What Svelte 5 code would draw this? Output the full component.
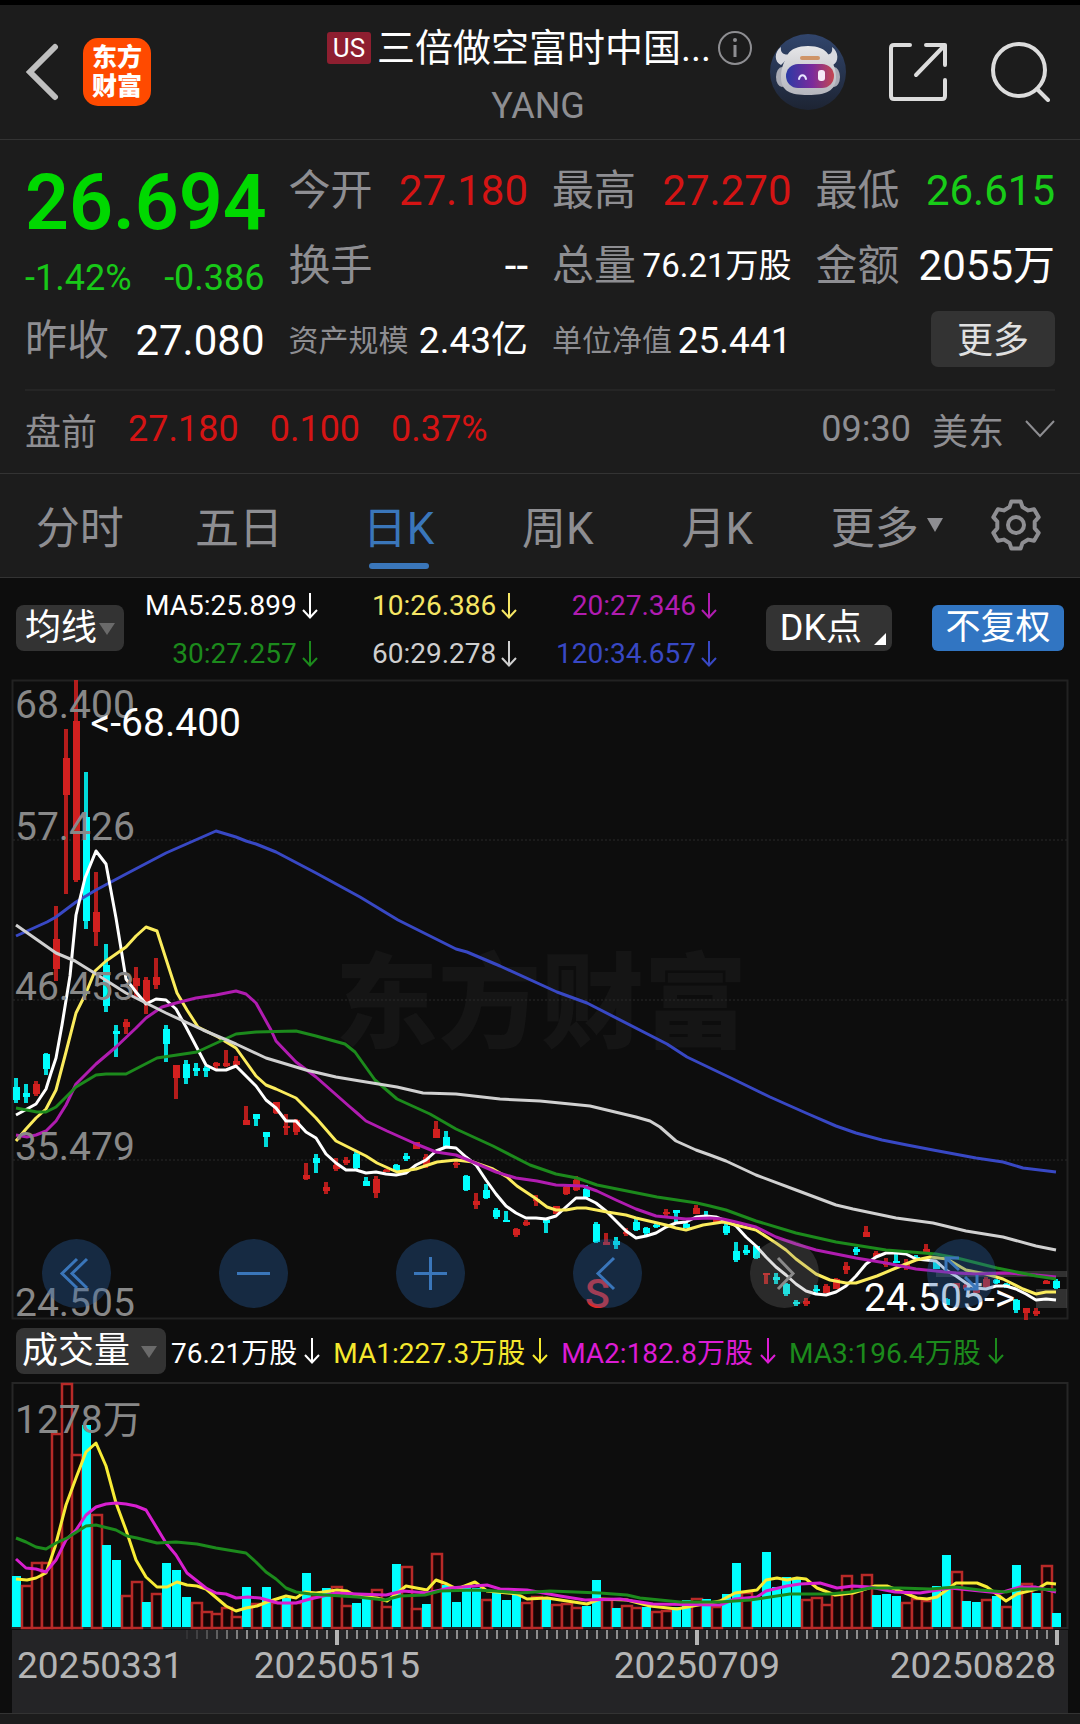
<script>
  const stats = [
    { label: '今开', value: '27.180', tone: 'up' },
    { label: '最高', value: '27.270', tone: 'up' },
    { label: '最低', value: '26.615', tone: 'down' },
    { label: '换手', value: '--', tone: '' },
    { label: '总量', value: '76.21万股', tone: '', size: 'tight' },
    { label: '金额', value: '2055万', tone: '' },
    { label: '昨收', value: '27.080', tone: '' },
    { label: '资产规模', value: '2.43亿', tone: '', size: 'long' },
    { label: '单位净值', value: '25.441', tone: '', size: 'long' }
  ];

  const tabs = ['分时', '五日', '日K', '周K', '月K'];
  let active = $state('日K');

  const averages = [
    { text: 'MA5:25.899', color: 'white' },
    { text: '10:26.386', color: 'yellow' },
    { text: '20:27.346', color: 'magenta' },
    { text: '30:27.257', color: 'green' },
    { text: '60:29.278', color: 'grey' },
    { text: '120:34.657', color: 'blue' }
  ];

  const volumeAverages = [
    { text: '76.21万股', color: 'white' },
    { text: 'MA1:227.3万股', color: 'lemon' },
    { text: 'MA2:182.8万股', color: 'pink' },
    { text: 'MA3:196.4万股', color: 'green' }
  ];

  const step = 10;
  const firstX = 16;

  // direction, high, body top, body bottom, low
  const candles = `c 1078 1087 1100 1103|c 1084 1093 1097 1103|r 1081 1084 1094 1096|c 1053 1054 1069 1075|r 906 939 969 981
r 729 758 795 894|r 680 721 880 882|c 772 817 921 929|r 872 912 932 946|c 944 965 1006 1012
c 1025 1031 1034 1057|r 1019 1022 1027 1034|r 967 978 986 997|r 977 980 1003 1014|r 958 977 985 989
c 1025 1029 1044 1062|r 1065 1065 1078 1099|c 1060 1064 1078 1084|c 1063 1068 1071 1076|c 1066 1068 1071 1077
r 1062 1063 1066 1069|r 1050 1063 1066 1067|r 1056 1061 1065 1067|r 1106 1120 1125 1125|c 1114 1114 1119 1126
c 1132 1132 1137 1147|r 1102 1102 1113 1114|r 1114 1126 1128 1135|r 1119 1120 1132 1135|r 1163 1175 1179 1180
c 1154 1158 1163 1173|r 1182 1187 1191 1194|r 1158 1165 1169 1171|r 1157 1160 1163 1165|c 1152 1154 1168 1169
c 1177 1181 1186 1186|r 1176 1179 1193 1198|r 1169 1170 1172 1172|c 1164 1165 1172 1172|c 1153 1156 1159 1161
r 1142 1142 1149 1149|r 1154 1157 1165 1168|r 1121 1129 1138 1138|c 1131 1137 1147 1147|r 1161 1163 1165 1168
c 1175 1176 1190 1191|r 1193 1201 1205 1209|c 1184 1190 1198 1199|c 1208 1210 1217 1219|c 1211 1220 1222 1222
r 1228 1229 1235 1237|r 1220 1222 1225 1226|r 1195 1199 1201 1206|c 1220 1220 1223 1233|r 1206 1206 1214 1214
r 1186 1187 1194 1195|r 1176 1180 1190 1191|c 1185 1189 1197 1198|c 1222 1224 1242 1243|r 1233 1242 1245 1245
c 1237 1241 1245 1249|r 1228 1232 1234 1236|c 1219 1222 1230 1231|c 1227 1228 1233 1235|c 1223 1225 1227 1228
r 1209 1212 1214 1216|c 1210 1210 1213 1222|c 1222 1224 1228 1228|r 1205 1208 1214 1214|c 1211 1215 1218 1218
r 1217 1219 1222 1222|c 1224 1226 1233 1235|c 1242 1251 1260 1262|c 1245 1250 1253 1255|c 1246 1246 1258 1259
r 1273 1273 1275 1284|c 1273 1277 1280 1284|c 1283 1284 1294 1296|c 1300 1302 1304 1306|r 1298 1301 1304 1306
c 1285 1289 1291 1293|r 1284 1286 1293 1293|r 1278 1279 1289 1289|r 1262 1266 1270 1274|c 1247 1249 1252 1255
r 1226 1232 1237 1237|r 1251 1253 1257 1257|r 1258 1263 1265 1267|c 1254 1261 1263 1263|r 1259 1263 1267 1270
c 1255 1257 1259 1260|r 1244 1249 1253 1253|c 1262 1262 1269 1269|c 1298 1299 1305 1305|r 1283 1283 1288 1288
r 1283 1285 1289 1289|r 1287 1290 1293 1293|r 1277 1279 1287 1288|c 1279 1280 1283 1284|c 1283 1284 1287 1288
c 1299 1300 1310 1313|r 1308 1308 1313 1320|r 1308 1311 1314 1316|r 1280 1281 1284 1284|c 1279 1281 1288 1289`
    .split(/[|\n]/)
    .map((row, i) => {
      const [dir, ...v] = row.trim().split(' ');
      const [high, top, bottom, low] = v.map(Number);
      return { dir, high, top, bottom, low, x: firstX + i * step };
    });

  const volumes = `c1576 r1585 r1562 r1562 r1433 r1383 r1454 c1425 r1514 c1545 c1560 r1595 r1581 c1602 r1593 c1563 c1570 c1597 r1602 r1611
r1613 r1607 r1616 c1587 r1603 c1587 r1602 c1598 r1602 c1573 r1596 c1588 r1586 r1605 c1603 c1597 r1589 r1606 c1564 r1566
r1608 c1604 r1553 c1585 c1602 c1585 c1588 r1599 c1593 c1600 c1595 r1602 r1596 c1598 r1604 r1603 r1607 c1606 c1580 r1599
c1608 r1605 r1607 c1607 r1611 r1610 c1607 c1600 r1598 c1599 r1606 c1594 c1563 r1592 c1598 c1552 c1587 c1577 c1579 r1599
r1597 r1604 r1594 r1575 r1590 r1574 c1595 c1594 c1596 r1602 r1598 r1600 c1586 c1555 r1571 c1601 c1602 r1599 c1596 r1606
c1565 r1583 c1593 r1565 c1613`
    .split(/\s+/)
    .map((v, i) => ({ dir: v[0], top: Number(v.slice(1)), x: firstX + i * step }));

  const priceLines = [
    { color: '#3848c4', pts: '16,936 47,922 56,917 76,902 96,890 126,874 166,853 216,831 236,837 246,841 256,844 276,852 316,873 360,897 398,920 456,949 467,952 500,966 557,992 587,1003 667,1044 687,1057 733,1079 770,1097 806,1113 836,1126 856,1133 882,1140 907,1145 933,1150 976,1158 1003,1162 1023,1168 1056,1172' },
    { color: '#fff', pts: '16,1115 27,1109 36,1104 46,1089 51,1073 56,1058 62,1025 70,976 76,915 85,878 96,851 106,864 116,918 126,979 136,992 146,1004 156,999 166,1000 176,1009 186,1027 196,1046 206,1065 216,1070 226,1070 236,1066 246,1076 256,1086 266,1100 276,1108 286,1121 296,1121 306,1132 316,1138 326,1154 336,1163 346,1170 356,1170 366,1173 376,1172 386,1174 396,1175 406,1173 416,1165 426,1160 436,1151 446,1147 456,1148 466,1157 476,1165 486,1180 496,1194 506,1206 516,1213 526,1218 536,1218 546,1219 556,1216 566,1207 576,1198 586,1198 596,1203 606,1211 616,1221 626,1231 636,1238 646,1236 656,1233 666,1227 676,1223 686,1222 696,1217 706,1216 716,1217 726,1221 736,1226 746,1237 756,1246 766,1257 776,1267 786,1275 796,1284 806,1291 816,1294 826,1295 836,1292 846,1286 856,1276 866,1264 876,1257 886,1253 896,1253 906,1254 916,1259 926,1260 936,1261 946,1270 956,1276 966,1283 976,1288 986,1289 996,1286 1006,1286 1016,1289 1026,1294 1036,1300 1046,1299 1056,1300' },
    { color: '#fbec5d', pts: '16,1141 26,1129 36,1118 46,1109 56,1090 66,1052 76,1013 86,993 95,971 106,961 116,954 126,947 136,936 146,927 157,931 166,959 177,993 187,1010 198,1027 218,1037 236,1048 256,1076 266,1085 276,1089 296,1098 316,1118 336,1141 350,1148 366,1156 377,1163 397,1172 416,1169 437,1162 456,1160 473,1162 493,1169 507,1177 517,1186 535,1198 547,1207 556,1210 566,1210 577,1208 586,1208 607,1212 626,1215 636,1218 666,1225 676,1228 686,1230 703,1225 723,1222 736,1225 756,1230 776,1243 786,1250 796,1259 816,1274 830,1280 846,1283 856,1283 877,1276 896,1268 916,1260 930,1257 947,1259 966,1270 986,1274 1003,1279 1023,1289 1036,1294 1046,1292 1056,1292' },
    { color: '#b01cb0', pts: '16,1135 27,1137 36,1135 46,1131 56,1121 66,1105 76,1084 96,1064 116,1047 136,1028 146,1018 162,1007 176,1003 196,998 216,995 236,991 246,994 256,1003 271,1030 276,1041 296,1062 316,1077 350,1107 357,1113 366,1121 387,1131 416,1144 436,1152 456,1155 473,1162 496,1172 516,1178 537,1181 556,1185 583,1186 597,1191 616,1200 636,1209 656,1216 686,1219 710,1218 723,1219 736,1222 756,1227 776,1237 796,1244 816,1250 856,1258 886,1263 916,1269 956,1273 976,1274 1006,1273 1036,1275 1056,1277' },
    { color: '#1c8a1c', pts: '16,1108 37,1112 46,1112 56,1107 76,1087 96,1075 106,1074 126,1074 157,1058 197,1052 236,1034 256,1032 296,1031 316,1036 345,1044 355,1052 375,1080 397,1099 430,1114 456,1129 493,1146 530,1165 556,1174 577,1178 597,1185 657,1197 697,1203 710,1206 726,1210 756,1221 796,1233 836,1242 886,1250 936,1254 957,1258 997,1268 1036,1276 1056,1279' },
    { color: '#d0d0d0', pts: '16,925 36,939 56,953 75,961 96,974 126,993 146,1003 166,1013 203,1030 236,1044 266,1058 306,1070 336,1077 360,1081 397,1087 423,1093 456,1094 500,1099 540,1101 590,1106 636,1117 650,1121 660,1127 676,1141 696,1150 710,1155 726,1161 756,1175 796,1190 836,1205 853,1209 896,1218 933,1223 966,1231 1003,1237 1036,1246 1056,1250' }
  ];

  const volumeLines = [
    { color: '#f8ec36', pts: '16,1579 27,1580 36,1578 46,1573 55,1547 66,1505 76,1478 86,1452 96,1443 106,1466 116,1503 126,1530 136,1560 146,1577 157,1587 167,1587 177,1582 187,1585 197,1586 206,1589 226,1606 236,1611 246,1608 257,1606 267,1602 286,1596 296,1598 305,1592 316,1593 337,1590 347,1591 356,1596 367,1597 377,1598 387,1601 396,1594 406,1586 427,1590 436,1580 447,1584 457,1589 475,1582 487,1591 517,1594 527,1599 547,1598 587,1604 600,1599 627,1600 650,1606 677,1609 693,1606 720,1601 735,1593 757,1590 766,1580 777,1578 787,1580 797,1578 806,1579 817,1588 835,1595 853,1593 875,1586 887,1586 905,1593 917,1598 927,1599 937,1597 956,1583 977,1583 987,1587 1006,1601 1017,1594 1037,1589 1047,1583 1056,1584' },
    { color: '#d81fd0', pts: '16,1559 26,1568 36,1569 46,1572 56,1560 66,1540 76,1530 86,1515 96,1507 106,1504 116,1503 126,1504 136,1506 146,1510 166,1543 176,1555 187,1573 206,1588 216,1593 226,1594 236,1598 248,1597 260,1598 278,1603 296,1603 310,1599 336,1593 357,1594 386,1595 403,1591 427,1593 450,1588 487,1585 500,1589 527,1590 560,1596 585,1600 620,1599 640,1602 653,1604 720,1605 735,1599 757,1597 766,1591 787,1586 800,1584 820,1583 837,1588 853,1586 870,1587 895,1592 920,1593 950,1588 970,1590 1000,1593 1020,1587 1035,1587 1056,1592' },
    { color: '#1c8a1c', pts: '16,1538 26,1542 36,1547 46,1549 56,1543 67,1538 86,1526 96,1525 116,1530 127,1536 137,1538 157,1543 176,1542 197,1544 216,1548 246,1553 256,1562 266,1572 276,1579 286,1588 296,1592 310,1594 357,1597 385,1600 400,1596 425,1595 440,1591 475,1590 495,1591 520,1593 550,1591 600,1593 627,1595 640,1598 680,1602 720,1602 750,1600 790,1594 830,1594 850,1592 870,1588 900,1588 930,1589 956,1587 980,1590 1006,1592 1020,1589 1040,1589 1056,1590' }
  ];

  const priceLabels = [
    { text: '68.400', y: 718 },
    { text: '57.426', y: 840 },
    { text: '46.453', y: 1000 },
    { text: '35.479', y: 1160 },
    { text: '24.505', y: 1316 }
  ];

  const ticks = Array.from({ length: 88 }, (_, k) => {
    const x = 187 + k * 10;
    return { x, major: x === 337 || x === 697 || x === 1057, opacity: Math.min(1, (k + 1) / 7) };
  });

  const tools = [
    { name: '最早', d: 'M35 20 L20 34.500 L35 49 M45 20 L30 34.500 L45 49' },
    { name: '缩小', d: 'M18 34.500 H51' },
    { name: '放大', d: 'M18 34.500 H51 M34.500 18 V51' },
    { name: '向左', d: 'M41 19 L25 34.500 L41 50' },
    { name: '向右', d: 'M28 19 L43 34.500 L28 50', off: true },
    { name: '全屏', d: 'M19 32 V19 H32 M19 19 L32 31 M37 50 H50 V36 M38 38 L50 50' }
  ];

  // Six-toothed gear outline
  const gear = Array.from({ length: 6 }, (_, k) => {
    const at = (deg, r) => {
      const a = ((k * 60 - 90 + deg) * Math.PI) / 180;
      return `${(26 + r * Math.cos(a)).toFixed(1)},${(26 + r * Math.sin(a)).toFixed(1)}`;
    };
    return [at(-20, 19), at(-11, 24), at(11, 24), at(20, 19)].join(' ');
  }).join(' ');
</script>

{#snippet downArrow()}
  <svg class="arrow" viewBox="0 0 16 28" aria-hidden="true"><path d="M8 1 V25 M1 18 L8 25.500 L15 18" /></svg>
{/snippet}

<div class="app">
  <header class="top">
    <div class="left">
      <button class="plain" aria-label="返回">
        <svg width="34" height="60" viewBox="0 0 34 60"><path d="M30 5 L5 30 L30 55" fill="none" stroke="#bfbfbf" stroke-width="6" stroke-linecap="round" /></svg>
      </button>
      <a class="logo" href="#home"><span>东方</span><span>财富</span></a>
    </div>
    <div class="title">
      <h1>
        <span class="us">US</span>
        <span>三倍做空富时中国...</span>
        <svg width="36" height="36" viewBox="0 0 36 36" aria-hidden="true">
          <circle cx="18" cy="18" r="16" fill="none" stroke="#8e8e92" stroke-width="2" />
          <path d="M18 15 V27" stroke="#8e8e92" stroke-width="3" /><circle cx="18" cy="10" r="2" fill="#8e8e92" />
        </svg>
      </h1>
      <p>YANG</p>
    </div>
    <div class="right">
      <button class="plain" aria-label="智能助手">
        <svg width="76" height="76" viewBox="0 0 76 76">
          <defs>
            <linearGradient id="sky" x1="0" y1="0" x2="0" y2="1"><stop offset="0" stop-color="#31456c" /><stop offset="1" stop-color="#1d2433" /></linearGradient>
            <linearGradient id="visor" x1="0" y1="0" x2="1" y2="0"><stop offset="0" stop-color="#2b3aa5" /><stop offset=".55" stop-color="#7b2a9c" /><stop offset="1" stop-color="#c4474f" /></linearGradient>
            <linearGradient id="shell" x1="0" y1="0" x2="0" y2="1"><stop offset="0" stop-color="#e6e6e8" /><stop offset="1" stop-color="#b4b5bd" /></linearGradient>
          </defs>
          <circle cx="38" cy="38" r="38" fill="url(#sky)" />
          <path d="M11 13 C4 18 4 28 11 31 L22 20 C14 22 10 19 11 13 Z M62 13 C69 18 69 28 63 31 L53 20 C60 22 63 19 62 13 Z" fill="#d8d9df" />
          <ellipse cx="12" cy="43" rx="6" ry="10" fill="#a9abb5" /><ellipse cx="64" cy="43" rx="6" ry="10" fill="#a9abb5" />
          <path d="M38 12 C48 12 55 15 58 20 C61 27 66 32 66 43 C66 57 56 61 38 61 C20 61 11 57 11 43 C11 32 15 27 18 20 C21 15 28 12 38 12 Z" fill="url(#shell)" />
          <rect x="16" y="30" width="48" height="24" rx="12" fill="url(#visor)" />
          <path d="M29 45 C30 40 35 40 36 45" fill="none" stroke="#e8e6ff" stroke-width="2" stroke-linecap="round" />
          <rect x="48" y="36" width="7" height="11" rx="3" fill="#f6e8f6" />
          <rect x="30" y="22" width="20" height="4" rx="2" fill="#cf9468" />
        </svg>
      </button>
      <button class="plain" aria-label="分享">
        <svg width="60" height="60" viewBox="0 0 60 60" fill="none" stroke="#dcdcdc" stroke-width="4" stroke-linecap="round" stroke-linejoin="round">
          <path d="M22 3 H6 Q3 3 3 6 V54 Q3 57 6 57 H54 Q57 57 57 54 V38 M38 3 H57 V23 M57 3 L28 33" />
        </svg>
      </button>
      <button class="plain" aria-label="搜索">
        <svg width="60" height="60" viewBox="0 0 60 60" fill="none" stroke="#dcdcdc" stroke-width="4" stroke-linecap="round">
          <circle cx="29" cy="28" r="26" /><path d="M47 47 L58 58" />
        </svg>
      </button>
    </div>
  </header>

  <section class="quote">
    <div class="grid">
      <div class="price">
        <strong>26.694</strong>
        <div><span>-1.42%</span><span>-0.386</span></div>
      </div>
      {#each stats as s}
        <dl class={s.size}>
          <dt>{s.label}</dt>
          <dd class={s.tone}>{s.value}</dd>
        </dl>
      {/each}
      <div class="more"><button>更多</button></div>
    </div>
    <div class="pre">
      <span>盘前</span>
      <span class="up">27.180</span>
      <span class="up">0.100</span>
      <span class="up">0.37%</span>
      <span class="time">09:30</span>
      <span class="zone">美东</span>
      <svg width="30" height="20" viewBox="0 0 30 20" aria-hidden="true"><path d="M1 2 L15 17 L29 2" fill="none" stroke="#8e8e92" stroke-width="2" /></svg>
    </div>
  </section>

  <nav class="tabs">
    {#each tabs as t}
      <button class:active={active === t} onclick={() => (active = t)}>{t}</button>
    {/each}
    <button class="menu">更多<svg width="16" height="14" viewBox="0 0 16 14" aria-hidden="true"><path d="M0 0 H16 L8 14 Z" fill="#8e8e92" /></svg></button>
    <button aria-label="设置">
      <svg width="52" height="52" viewBox="0 0 52 52" fill="none" stroke="#8e8e92" stroke-width="4">
        <polygon points={gear} stroke-linejoin="round" /><circle cx="26" cy="26" r="8" />
      </svg>
    </button>
  </nav>

  <main>
    <div class="legend">
      <div class="pick short">
        <select aria-label="主图指标"><option>均线</option></select>
        <svg width="16" height="12" viewBox="0 0 16 12" aria-hidden="true"><path d="M0 0 H16 L8 12 Z" fill="#6a6a6a" /></svg>
      </div>
      <div class="averages">
        {#each averages as a}
          <span class={a.color}>{a.text}{@render downArrow()}</span>
        {/each}
      </div>
      <button class="dk">DK点<svg width="12" height="12" viewBox="0 0 12 12" aria-hidden="true"><path d="M12 0 V12 H0 Z" fill="#fff" /></svg></button>
      <button class="adjust">不复权</button>
    </div>

    <div class="chart">
      <svg viewBox="0 678 1080 642" role="img" aria-label="日K线图">
        <text x="541" y="1040" class="mark" text-anchor="middle">东方财富</text>
        <rect x="12.500" y="680.500" width="1055" height="638" fill="none" stroke="#222" stroke-width="2" />
        {#each [840, 1000, 1160] as y}
          <line x1="13" x2="1067" y1={y} y2={y} stroke="#2a2a2a" stroke-dasharray="2 2" />
        {/each}
        <g fill="#fff" fill-opacity=".15"><rect x="936" y="1271" width="131" height="6" /><rect x="1036" y="1289" width="31" height="19" /></g>
        {#each candles as c}
          <g fill={c.dir === 'r' ? '#d2201f' : '#00ffff'}>
            <rect x={c.x - 2} y={c.high} width="4" height={c.low - c.high} opacity=".85" />
            <rect x={c.x - 3} y={c.top} width="7" height={c.bottom - c.top} />
          </g>
        {/each}
        {#each priceLines as l}
          <polyline points={l.pts} fill="none" stroke={l.color} stroke-width="3" stroke-linejoin="round" />
        {/each}
        <g class="axis">
          {#each priceLabels as p}<text x="15" y={p.y}>{p.text}</text>{/each}
        </g>
        <g class="peak">
          <text x="241" y="736" text-anchor="end">&lt;-68.400</text>
          <text x="864" y="1311">24.505-&gt;</text>
        </g>
        <text x="585" y="1308" class="sell">S</text>
      </svg>
      <div class="tools">
        {#each tools as t}
          <button class:off={t.off} aria-label={t.name}><svg viewBox="0 0 69 69"><path d={t.d} /></svg></button>
        {/each}
      </div>
    </div>

    <div class="legend volume">
      <div class="pick">
        <select aria-label="副图指标"><option>成交量</option></select>
        <svg width="16" height="12" viewBox="0 0 16 12" aria-hidden="true"><path d="M0 0 H16 L8 12 Z" fill="#6a6a6a" /></svg>
      </div>
      {#each volumeAverages as a}
        <span class={a.color}>{a.text}{@render downArrow()}</span>
      {/each}
    </div>

    <div class="chart">
      <svg viewBox="0 1382 1080 331" role="img" aria-label="成交量图">
        <rect x="12.500" y="1383" width="1055" height="245" fill="none" stroke="#262626" stroke-width="2" />
        {#each volumes as v}
          {#if v.dir === 'r'}
            <rect x={v.x - 4} y={v.top + 1} width="10" height={1627 - v.top} fill="#160505" stroke="#b82a28" stroke-width="2.500" />
          {:else}
            <rect x={v.x - 4} y={v.top} width="9" height={1627 - v.top} fill="#00ffff" />
          {/if}
        {/each}
        {#each volumeLines as l}
          <polyline points={l.pts} fill="none" stroke={l.color} stroke-width="3" stroke-linejoin="round" />
        {/each}
        <text x="15" y="1433" class="axis">1278万</text>
        <rect x="12" y="1630" width="1056" height="83" fill="#242426" />
        {#each ticks as t}
          <rect x={t.major ? t.x - 2 : t.x - 1} y="1630" width={t.major ? 4 : 2} height={t.major ? 15 : 9} fill={t.major ? '#b4b4b4' : '#8c8c8c'} opacity={t.opacity} />
        {/each}
        <g class="dates">
          <text x="17" y="1678">20250331</text>
          <text x="337" y="1678" text-anchor="middle">20250515</text>
          <text x="697" y="1678" text-anchor="middle">20250709</text>
          <text x="1056" y="1678" text-anchor="end">20250828</text>
        </g>
      </svg>
    </div>
  </main>
  <footer></footer>
</div>

<style>
  :global(body) { margin: 0; background: #1c1c1c; }
  .app {
    background: #1c1c1c;
    color: #fff;
    font-family: Roboto, "Noto Sans CJK SC", sans-serif;
    font-size: 36px;
    border-top: 5px solid #000;
  }
  button, select { font: inherit; color: inherit; border: 0; padding: 0; margin: 0; background: none; }
  h1, p, dl, dd { margin: 0; font-weight: 400; }
  svg { display: block; }
  .up { color: #d41414; }
  .down { color: #18cc18; }

  .top { display: grid; grid-template-columns: 1fr auto 1fr; align-items: center; height: 134px; border-bottom: 1px solid #333; }
  .left { display: flex; align-items: center; gap: 24px; padding-left: 25px; }
  .logo {
    display: flex; flex-direction: column; justify-content: center; align-items: center;
    width: 68px; height: 68px; border-radius: 15px; background: #ff4a00;
    color: #fff; text-decoration: none; font-size: 25px; line-height: 29px; font-weight: 900;
  }
  .title { text-align: center; padding-top: 7px; }
  .title h1 { display: flex; align-items: center; gap: 6px; font-size: 38px; line-height: 52px; white-space: nowrap; }
  .title p { color: #8e8e92; line-height: 48px; margin: 8px 4px 0 0; }
  .us { width: 44px; height: 32px; line-height: 32px; font-size: 26px; background: #8e1f30; border-radius: 3px; }
  .right { display: flex; align-items: center; justify-content: flex-end; gap: 42px; padding-right: 30px; }

  .quote { padding: 13px 25px 0; border-bottom: 1px solid #333; }
  .grid { display: grid; grid-template-columns: repeat(4, minmax(0, 1fr)); grid-auto-rows: 75px; column-gap: 24px; padding-bottom: 11px; border-bottom: 2px solid #252525; }
  .price { grid-row: span 2; color: #00d800; }
  .price strong { display: block; font-size: 77px; line-height: 100px; font-weight: 600; }
  .price div { display: flex; justify-content: space-between; line-height: 50px; color: #18c818; }
  dl { display: flex; justify-content: space-between; align-items: center; white-space: nowrap; line-height: 50px; font-size: 42px; }
  dt { color: #8e8e92; }
  .tight dd { font-size: 33px; }
  .long dt { font-size: 30px; }
  .long dd { font-size: 37px; }
  .more { display: flex; justify-content: flex-end; align-items: center; }
  .more button { width: 124px; height: 56px; margin-bottom: 3px; padding-bottom: 4px; border-radius: 7px; background: #333; color: #e0e0e0; }
  .pre { display: flex; align-items: center; height: 76px; padding-bottom: 6px; gap: 31px; color: #8e8e92; }
  .time { margin-left: auto; }
  .zone { margin: 0 -10px; }

  .tabs { display: grid; grid-template-columns: repeat(6, 4fr) 3fr; height: 103px; padding-right: 4px; border-bottom: 1px solid #333; color: #8e8e92; font-size: 44px; }
  .tabs button { display: flex; align-items: center; justify-content: center; position: relative; gap: 8px; padding-bottom: 2px; }
  .tabs .menu { padding-left: 20px; }
  .tabs .active { color: #3a76ba; }
  .tabs .active::after { content: ""; position: absolute; bottom: 8px; width: 60px; height: 6px; border-radius: 3px; background: #3a76ba; }

  main { background: #0d0d0d; }
  .legend { display: flex; align-items: center; height: 100px; padding: 0 16px; font-size: 28px; }
  .pick { position: relative; width: 150px; height: 46px; border-radius: 8px; background: #333; }
  .pick.short { width: 108px; }
  .pick select { appearance: none; width: 100%; height: 46px; padding-left: 6px; font-size: 36px; line-height: 46px; }
  .pick.short select { padding-left: 9px; }
  .pick svg { position: absolute; right: 9px; top: 18px; pointer-events: none; }
  .averages { flex: 1; display: grid; grid-template-columns: repeat(3, 1fr); column-gap: 6px; line-height: 48px; max-width: 593px; padding-top: 3px; }
  .averages span { display: flex; align-items: center; justify-content: flex-end; gap: 5px; }
  .arrow { width: 16px; height: 28px; fill: none; stroke: currentColor; stroke-width: 2; flex: none; }
  .dk { display: flex; align-items: flex-end; gap: 12px; height: 46px; margin-left: auto; padding: 0 6px 0 14px; border-radius: 8px; background: #333; font-size: 36px; line-height: 46px; }
  .dk svg { margin-bottom: 6px; }
  .adjust { width: 132px; height: 46px; margin-left: 40px; border-radius: 6px; background: #3175c2; font-size: 35px; line-height: 46px; }
  .volume { height: 62px; gap: 13px; }
  .volume .pick { margin-right: -8px; }
  .volume span { display: flex; align-items: center; gap: 7px; white-space: nowrap; }
  .white { color: #fff; }
  .yellow { color: #f6e664; }
  .lemon { color: #f5e82e; }
  .magenta { color: #b01cb0; }
  .pink { color: #dc1cd4; }
  .green { color: #1c8a1c; }
  .grey { color: #cfcfcf; }
  .blue { color: #3848c4; }

  .chart { position: relative; }
  .chart > svg { width: 100%; height: auto; }
  .mark { font-size: 103px; font-weight: 900; fill: #151515; }
  .axis { font-size: 39px; fill: #888; }
  .peak { font-size: 39px; fill: #fff; }
  .sell { font-size: 41px; font-weight: 500; fill: #e02a2a; }
  .dates { font-size: 37px; fill: #b4b4b4; }
  .tools { position: absolute; left: 42px; right: 84px; bottom: 12px; display: flex; justify-content: space-between; }
  .tools button { width: 69px; height: 69px; border-radius: 50%; background: rgba(42, 100, 170, 0.34); }
  .tools path { fill: none; stroke: #3a76ba; stroke-width: 3; }
  .tools .off { background: rgba(130, 130, 130, 0.25); }
  .tools .off path { stroke: #8a8a8a; }
  footer { height: 10px; border-top: 1px solid #333; }
</style>
